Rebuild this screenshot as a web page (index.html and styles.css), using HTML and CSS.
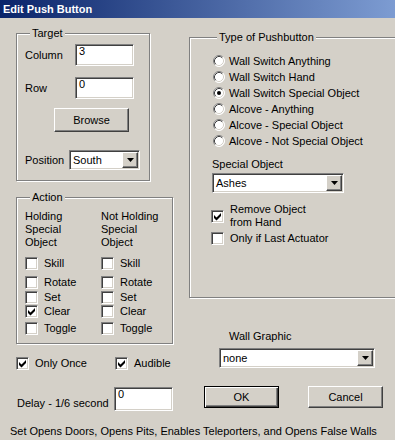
FILE: index.html
```html
<!DOCTYPE html>
<html lang="en">
<head>
    <meta charset="UTF-8">
    <title>Edit Push Button</title>
    <link rel="stylesheet" href="styles.css">
</head>
<body>

<svg class="sprite" xmlns="http://www.w3.org/2000/svg">
    <symbol id="radio" viewBox="0 0 12 12">
        <circle cx="6" cy="6" r="5.5" fill="#fff"/>
        <path d="M2.11 9.89A5.5 5.5 0 0 1 9.89 2.11" fill="none" stroke="#808080"/>
        <path d="M9.89 2.11A5.5 5.5 0 0 1 2.11 9.89" fill="none" stroke="#fff"/>
        <path d="M2.82 9.18A4.5 4.5 0 0 1 9.18 2.82" fill="none" stroke="#404040"/>
        <path d="M9.18 2.82A4.5 4.5 0 0 1 2.82 9.18" fill="none" stroke="#d4d0c8"/>
    </symbol>
    <symbol id="tick" viewBox="0 0 11 11">
        <path d="M2 4L4.5 6.5 9 2v3L4.5 9.5 2 7z"/>
    </symbol>
    <symbol id="down" viewBox="0 0 7 4">
        <path d="M0 0h7L3.5 4z"/>
    </symbol>
</svg>

<div class="titlebar">Edit Push Button</div>

<div class="dialog">
    <div class="col-left">
        <fieldset class="group target">
            <legend>Target</legend>
            <div class="field">
                <span class="field-label">Column</span>
                <div class="edit small">3</div>
            </div>
            <div class="field second">
                <span class="field-label">Row</span>
                <div class="edit small">0</div>
            </div>
            <div class="btn browse">Browse</div>
            <div class="field position">
                <span class="field-label short">Position</span>
                <div class="combo pos-combo">
                    <span class="combo-text">South</span>
                    <span class="combo-btn"><svg><use href="#down"/></svg></span>
                </div>
            </div>
        </fieldset>

        <fieldset class="group action">
            <legend>Action</legend>
            <div class="action-grid">
                <div class="head">Holding<br>Special<br>Object</div>
                <div class="head">Not Holding<br>Special<br>Object</div>

                <label class="check"><span class="cb"></span>Skill</label>
                <label class="check"><span class="cb"></span>Skill</label>

                <label class="check"><span class="cb"></span>Rotate</label>
                <label class="check"><span class="cb"></span>Rotate</label>

                <label class="check"><span class="cb"></span>Set</label>
                <label class="check"><span class="cb"></span>Set</label>

                <label class="check"><span class="cb"><svg><use href="#tick"/></svg></span>Clear</label>
                <label class="check"><span class="cb"></span>Clear</label>

                <label class="check"><span class="cb"></span>Toggle</label>
                <label class="check"><span class="cb"></span>Toggle</label>
            </div>
        </fieldset>

        <div class="flags">
            <label class="check"><span class="cb"><svg><use href="#tick"/></svg></span>Only Once</label>
            <label class="check audible"><span class="cb"><svg><use href="#tick"/></svg></span>Audible</label>
        </div>

        <div class="delay">
            <span class="delay-label">Delay - 1/6 second</span>
            <div class="edit delay-edit">0</div>
        </div>
    </div>

    <div class="col-right">
        <fieldset class="group type">
            <legend>Type of Pushbutton</legend>
            <div class="radios">
                <label class="radio"><svg><use href="#radio"/></svg>Wall Switch Anything</label>
                <label class="radio"><svg><use href="#radio"/></svg>Wall Switch Hand</label>
                <label class="radio"><svg viewBox="0 0 12 12"><use href="#radio"/><circle cx="6" cy="6" r="2"/></svg>Wall Switch Special Object</label>
                <label class="radio"><svg><use href="#radio"/></svg>Alcove - Anything</label>
                <label class="radio"><svg><use href="#radio"/></svg>Alcove - Special Object</label>
                <label class="radio"><svg><use href="#radio"/></svg>Alcove - Not Special Object</label>
            </div>
            <div class="special-label">Special Object</div>
            <div class="combo special-combo">
                <span class="combo-text">Ashes</span>
                <span class="combo-btn"><svg><use href="#down"/></svg></span>
            </div>
            <label class="check remove"><span class="cb"><svg><use href="#tick"/></svg></span>Remove Object<br>from Hand</label>
            <label class="check last"><span class="cb"></span>Only if Last Actuator</label>
        </fieldset>

        <div class="wall-label">Wall Graphic</div>
        <div class="combo wall-combo">
            <span class="combo-text">none</span>
            <span class="combo-btn"><svg><use href="#down"/></svg></span>
        </div>

        <div class="buttons">
            <div class="btn default">OK</div>
            <div class="btn cancel">Cancel</div>
        </div>
    </div>
</div>

<div class="status">Set Opens Doors, Opens Pits, Enables Teleporters, and Opens False Walls</div>

</body>
</html>
```

FILE: styles.css
```css
* {
    margin: 0;
    padding: 0;
    box-sizing: border-box;
}
body {
    font-family: "Liberation Sans", Arial, sans-serif;
    font-size: 11px;
    line-height: 13px;
    color: #000;
    background-color: #d4d0c8;
    width: 395px;
    height: 440px;
    overflow: hidden;
}
.sprite {
    display: block;
    width: 0;
    height: 0;
}
.titlebar {
    height: 18px;
    line-height: 18px;
    padding-left: 3px;
    color: #fff;
    font-weight: bold;
    background: linear-gradient(to right, #0a246a, #7d9cd2);
}
.dialog {
    display: flex;
    padding-left: 16px;
}
.col-left {
    width: 158px;
    flex-shrink: 0;
    display: flex;
    flex-direction: column;
}
.col-right {
    width: 220px;
    flex-shrink: 0;
    margin-left: 15px;
    display: flex;
    flex-direction: column;
}

/* group boxes */
.group {
    border: 1px solid #808080;
    box-shadow: inset 1px 1px #fff, 1px 1px #fff;
    min-width: 0;
}
.group legend {
    margin-left: 5px;
    padding: 0 2px;
    line-height: 13px;
    background-color: #d4d0c8;
}

/* 3d controls */
.edit,
.combo {
    background-color: #fff;
    border: 1px solid;
    border-color: #808080 #fff #fff #808080;
    box-shadow: inset 1px 1px #404040, inset -1px -1px #d4d0c8;
}
.edit {
    padding-left: 3px;
}
.edit.small {
    width: 59px;
    height: 22px;
}
.combo {
    display: flex;
    height: 20px;
    padding: 1px;
}
.combo-text {
    flex: 1;
    padding-left: 2px;
    line-height: 16px;
}
.combo-btn,
.btn {
    background-color: #d4d0c8;
    border: 1px solid;
    border-color: #fff #404040 #404040 #fff;
    box-shadow: inset -1px -1px #808080;
}
.combo-btn {
    width: 16px;
    height: 16px;
    display: flex;
    justify-content: center;
    align-items: center;
}
.combo-btn svg {
    width: 7px;
    height: 4px;
}
.btn {
    width: 75px;
    height: 22px;
    display: flex;
    justify-content: center;
    align-items: center;
}
.btn.default {
    border-color: #000;
    box-shadow: inset 1px 1px #fff, inset -1px -1px #404040, inset -2px -2px #808080;
}

/* checkboxes and radios */
.check {
    display: flex;
    align-items: center;
    gap: 6px;
}
.cb {
    width: 13px;
    height: 13px;
    flex-shrink: 0;
    background-color: #fff;
    border: 1px solid;
    border-color: #808080 #fff #fff #808080;
    box-shadow: inset 1px 1px #404040, inset -1px -1px #d4d0c8;
}
.cb svg {
    display: block;
    width: 11px;
    height: 11px;
}
.radio {
    display: flex;
    align-items: center;
    height: 16px;
    gap: 4px;
    padding-left: 1px;
}
.radio svg {
    width: 12px;
    height: 12px;
    flex-shrink: 0;
}

/* target */
.target {
    margin-top: 9px;
    width: 134px;
    padding: 4px 0 10px 8px;
}
.field {
    display: flex;
    align-items: center;
}
.field-label {
    width: 50px;
}
.field-label.short {
    width: 44px;
}
.field.second {
    margin-top: 11px;
}
.btn.browse {
    height: 24px;
    margin: 9px 0 0 29px;
}
.field.position {
    margin-top: 18px;
}
.pos-combo {
    width: 71px;
}

/* action */
.action {
    margin-top: 10px;
    width: 157px;
    padding: 6px 0 8px 8px;
}
.action-grid {
    display: grid;
    grid-template-columns: 76px 70px;
    grid-template-rows: 47px 19px 15px 14px 17px 13px;
    align-items: start;
}
.flags {
    margin-top: 13px;
    display: grid;
    grid-template-columns: 99px auto;
}
.delay {
    margin-top: 17px;
    display: grid;
    grid-template-columns: 98px 59px;
    align-items: start;
}
.delay-label {
    margin: 10px 0 0 1px;
}
.edit.delay-edit {
    height: 24px;
}

/* type of pushbutton */
.type {
    margin-top: 13px;
    width: 220px;
    padding: 9px 0 52px 22px;
}
.special-label {
    margin-top: 9px;
}
.special-combo {
    margin-top: 2px;
    width: 132px;
}
.check.remove {
    margin: 10px 0 0 -1px;
}
.check.last {
    margin: 3px 0 0 -1px;
}
.wall-label {
    margin: 32px 0 0 40px;
}
.wall-combo {
    margin: 5px 0 0 30px;
    width: 156px;
}
.buttons {
    margin: 18px 0 0 15px;
    display: flex;
    gap: 29px;
}

.status {
    margin-top: 14px;
    padding-left: 10px;
    white-space: nowrap;
}
```
